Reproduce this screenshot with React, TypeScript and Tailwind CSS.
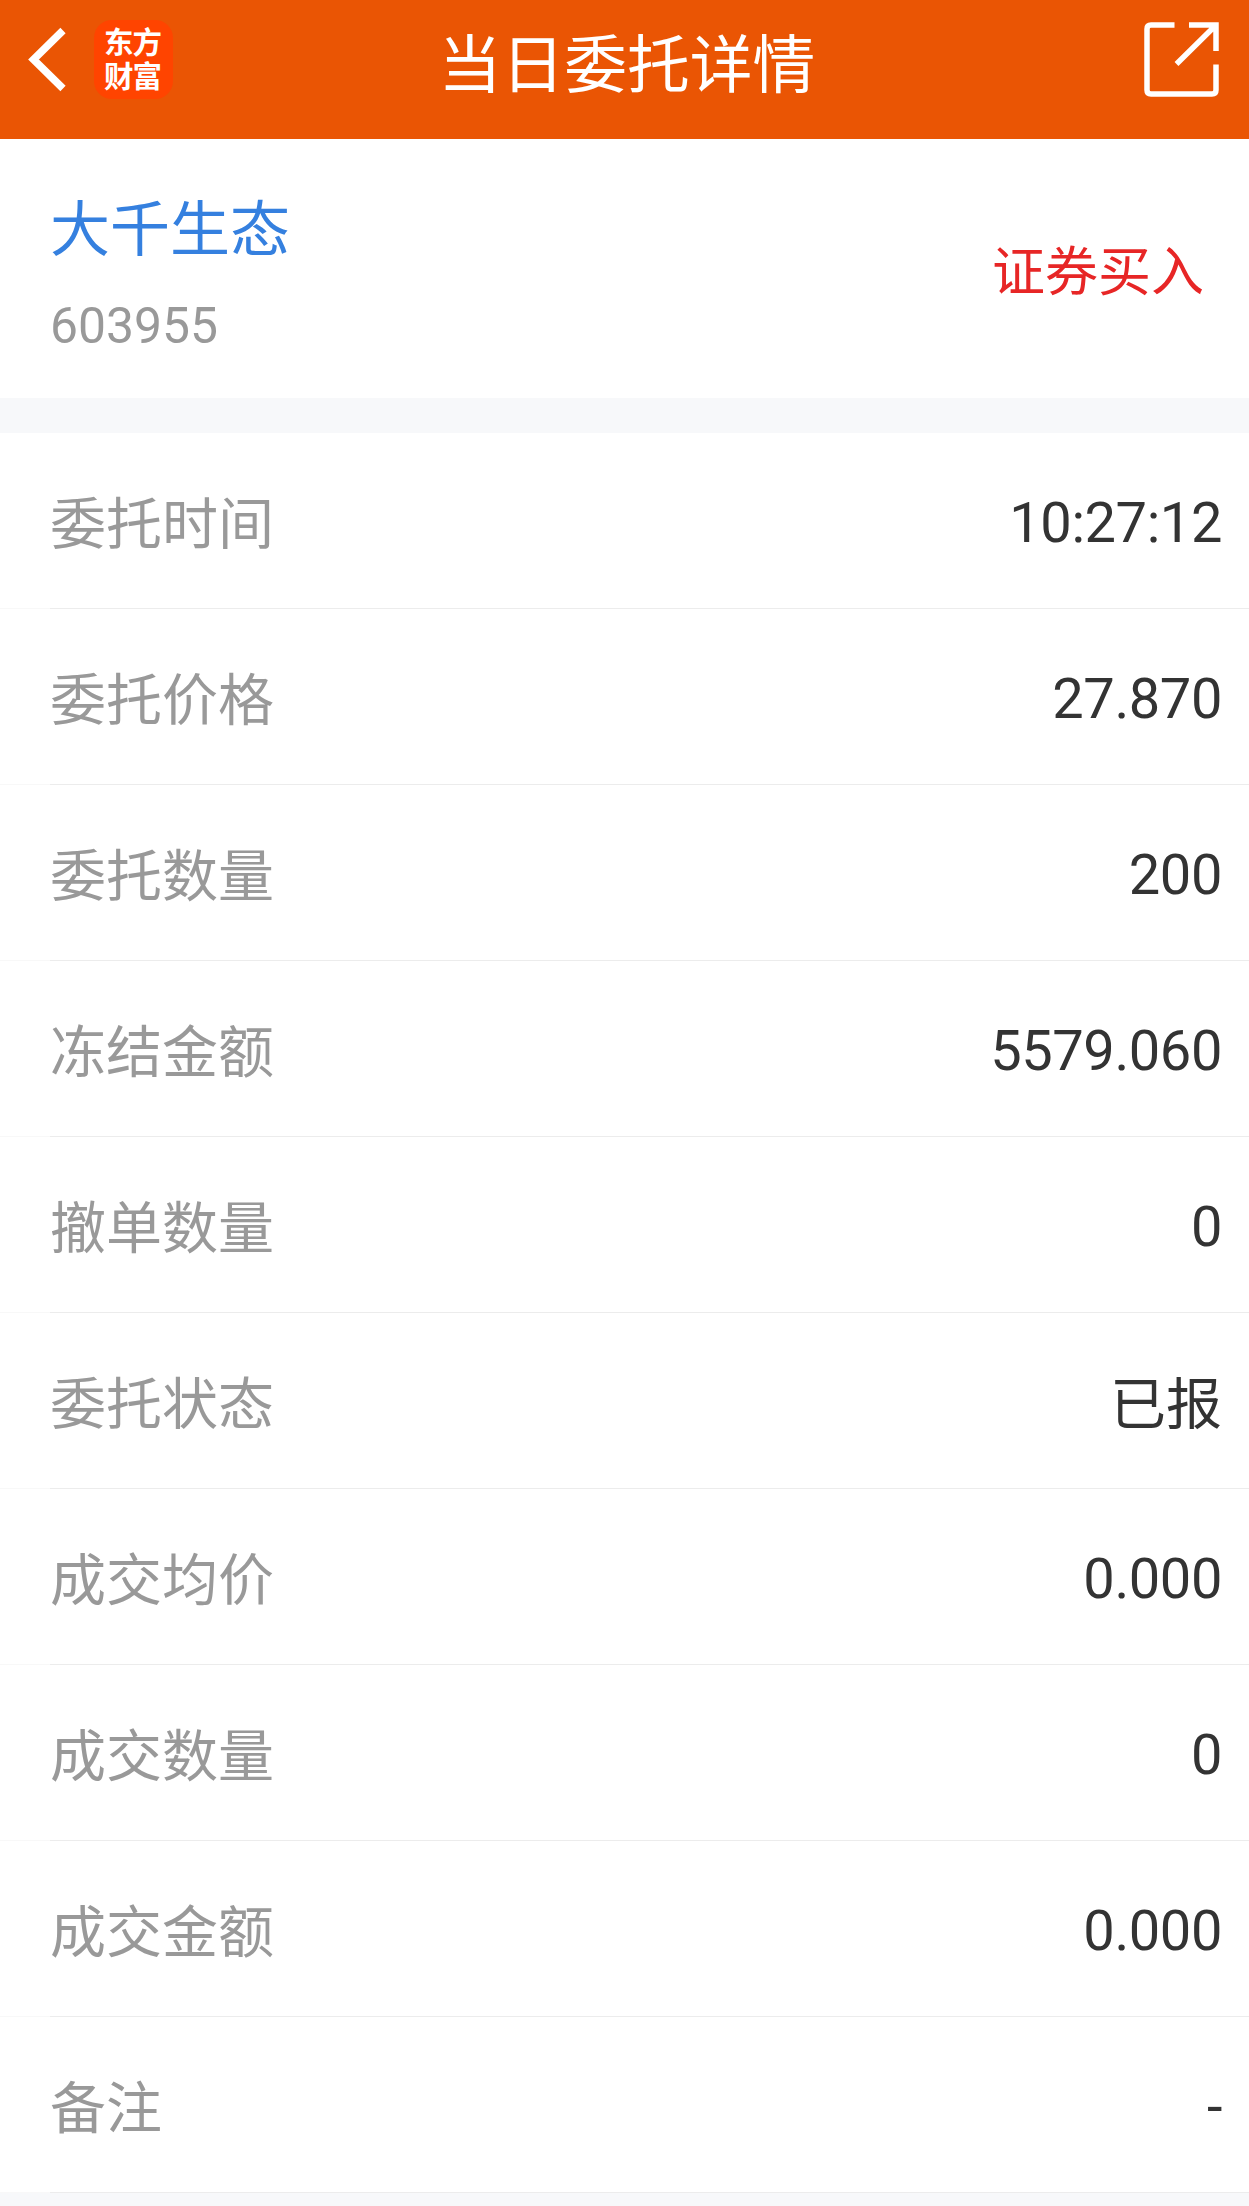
const rows: [string, string][] = [
  ["委托时间", "10:27:12"],
  ["委托价格", "27.870"],
  ["委托数量", "200"],
  ["冻结金额", "5579.060"],
  ["撤单数量", "0"],
  ["委托状态", "已报"],
  ["成交均价", "0.000"],
  ["成交数量", "0"],
  ["成交金额", "0.000"],
  ["备注", "-"],
];

export default function App() {
  return (
    <div className="flex h-[2206px] w-[1249px] flex-col overflow-hidden bg-[#f7f8fa] font-[Roboto,'Noto_Sans_CJK_SC',sans-serif]">
      <header className="grid h-[139px] shrink-0 grid-cols-[1fr_auto_1fr] items-start bg-[#ea5504] text-white">
        <div className="flex items-start">
          <svg
            className="mt-[27px] ml-[26px] h-[66px] w-[40px]"
            viewBox="0 0 40 66"
            fill="none"
            stroke="white"
            strokeWidth="7.5"
          >
            <path d="M37 3.5 7.5 32.5 37 61.5" />
          </svg>
          <div className="mt-[20px] ml-[28px] flex h-[79px] w-[79px] flex-col items-center rounded-[18px] bg-[#ff4400] pt-[6px] pr-[2px] text-[29.5px] leading-[34px] font-bold tracking-[-1px]">
            <span>东方</span>
            <span>财富</span>
          </div>
        </div>
        <h1 className="pt-[26px] pl-[5px] text-[62.8px] leading-[80px]">当日委托详情</h1>
        <svg
          className="mt-[22px] mr-[30px] h-[75px] w-[75px] justify-self-end"
          viewBox="0 0 75 75"
          fill="none"
          stroke="white"
          strokeWidth="5.5"
        >
          <path d="M30.5 3H7Q3 3 3 7V68Q3 72 7 72H68Q72 72 72 68V42.5M45 3H72V29M71 4 32.5 42" />
        </svg>
      </header>
      <section className="flex h-[259px] shrink-0 items-start justify-between bg-white pr-[45px] pl-[50px]">
        <div className="pt-[50px]">
          <div className="text-[60px] leading-[84px] text-[#3580df]">大千生态</div>
          <div className="mt-[11px] text-[49.8px] leading-[84px] text-[#999]">603955</div>
        </div>
        <div className="pt-[95px] text-[53px] leading-[78px] text-[#e72626]">证券买入</div>
      </section>
      <main className="mt-[35px] shrink-0">
        {rows.map(([label, value]) => (
          <div key={label} className="flex h-[176px] flex-col bg-white">
            <div className="flex h-[175px] items-center justify-between pr-[27px] pl-[50px]">
              <span className="pt-[8px] text-[56px] leading-[80px] text-[#999]">{label}</span>
              <span
                className={
                  value === "已报"
                    ? "pt-[8px] text-[56px] leading-[80px] text-[#333]"
                    : "pt-[5px] text-[56px] leading-[80px] tracking-[-0.4px] text-[#333]"
                }
              >
                {value}
              </span>
            </div>
            <div className="flex h-px">
              <div className="w-[50px] bg-[#f8f8f8]" />
              <div className="flex-1 bg-[#ececec]" />
            </div>
          </div>
        ))}
      </main>
    </div>
  );
}
